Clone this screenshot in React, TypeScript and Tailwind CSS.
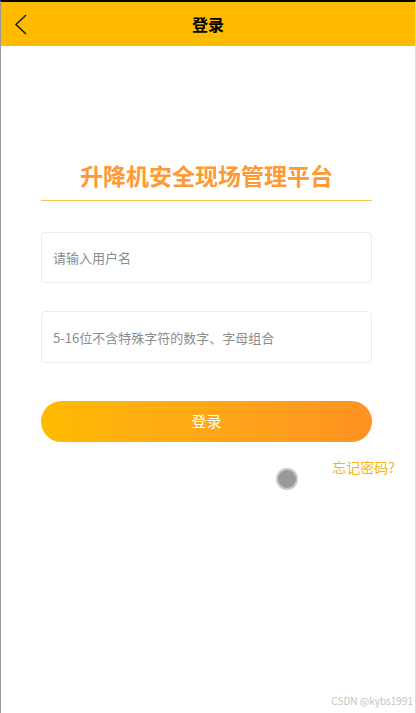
import React from 'react';

const App: React.FC = () => {
  return (
    <div
      className="relative h-[713px] w-[416px] overflow-hidden border-t-2 border-l border-r border-t-black border-l-[#9a9a9a] border-r-[#d8dde6] bg-white"
      style={{ fontFamily: '"Noto Sans CJK SC", "Noto Sans", sans-serif' }}
    >
      {/* 顶部导航 */}
      <div className="relative flex h-[44px] items-center justify-center bg-[#FFBB00]">
        <button className="absolute left-[12px] top-[11px] flex h-[22px] w-[16px] items-center justify-center">
          <svg width="14" height="21" viewBox="0 0 14 21" fill="none">
            <polyline points="12,1 2,10.5 12,20" stroke="#2a2016" strokeWidth="1.6" />
          </svg>
        </button>
        <h1 className="text-[16px] font-bold leading-none text-black">登录</h1>
      </div>

      {/* 表单区域 */}
      <div className="pl-[40px] pr-[43px]">
        <div className="mt-[118px] border-b border-[#F5C84A] pb-[13px] text-center text-[23px] font-bold leading-[23px] text-[#FF9933]">
          升降机安全现场管理平台
        </div>

        <div className="mt-[31px] flex flex-col gap-[28px]">
          <input
            className="h-[51px] w-full rounded-[4px] border border-[#ececec] px-[11px] text-[13px] outline-none placeholder:text-[#8c8c8c]"
            placeholder="请输入用户名"
          />
          <input
            type="password"
            className="h-[52px] w-full rounded-[4px] border border-[#ececec] px-[11px] text-[13px] outline-none placeholder:text-[#8c8c8c]"
            placeholder="5-16位不含特殊字符的数字、字母组合"
          />
        </div>

        <button className="mt-[38px] flex h-[41px] w-full items-center justify-center rounded-full bg-gradient-to-r from-[#FFBB00] to-[#FF9222] text-[15px] text-white">
          登录
        </button>
      </div>

      <div className="mt-[18px] flex justify-end pr-[20px]">
        <span className="text-[14px] leading-none text-[#F5B41E]">忘记密码?</span>
      </div>

      {/* 触摸指示 */}
      <div className="absolute left-[275px] top-[466px] h-[22px] w-[22px] rounded-full border-2 border-[#c8c8c8] bg-[#999999]" />

      <div className="absolute bottom-[5px] right-[2px] text-[10px] text-[#c4c4c4]">CSDN @kybs1991</div>
    </div>
  );
};

export default App;
